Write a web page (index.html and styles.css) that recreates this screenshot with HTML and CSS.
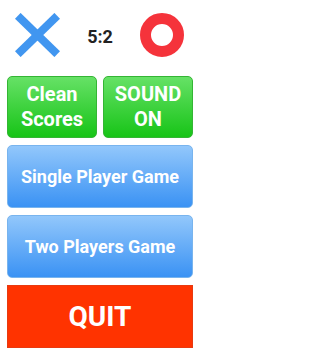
FILE: index.html
```html
<!DOCTYPE html>
<html>
<head>
<meta charset="utf-8">
<link rel="stylesheet" href="styles.css">
</head>
<body>
<div class="screen">
  <div class="header">
    <svg class="icon-x" width="45" height="44" viewBox="0 0 45 44">
      <line x1="2.8" y1="2.8" x2="42.2" y2="41.2" stroke="#4196f0" stroke-width="8"/>
      <line x1="42.2" y1="2.8" x2="2.8" y2="41.2" stroke="#4196f0" stroke-width="8"/>
    </svg>
    <div class="score">5:2</div>
    <svg class="icon-o" width="44" height="44" viewBox="0 0 44 44">
      <circle cx="22" cy="22" r="16.5" fill="none" stroke="#f5333b" stroke-width="11"/>
    </svg>
  </div>
  <div class="row">
    <div class="btn green">Clean<br>Scores</div>
    <div class="btn green">SOUND<br>ON</div>
  </div>
  <div class="btn blue">Single Player Game</div>
  <div class="btn blue">Two Players Game</div>
  <div class="btn quit">QUIT</div>
</div>
</body>
</html>
```
FILE: styles.css
```css
html, body {
  margin: 0;
  padding: 0;
  background: #ffffff;
}
.screen {
  width: 200px;
  height: 355px;
  box-sizing: border-box;
  padding: 0 7px 7px 7px;
  display: flex;
  flex-direction: column;
  gap: 7px;
  font-family: Roboto, "Liberation Sans", sans-serif;
}
.header {
  height: 69px;
  display: flex;
  align-items: center;
  justify-content: space-between;
  padding: 0 9px 0 8px;
}
.icon-x, .icon-o {
  display: block;
}
.score {
  font-size: 18px;
  font-weight: bold;
  color: #222222;
  padding-top: 3px;
}
.row {
  display: flex;
  gap: 6px;
  height: 62px;
}
.btn {
  box-sizing: border-box;
  display: flex;
  align-items: center;
  justify-content: center;
  text-align: center;
  color: #ffffff;
  font-weight: bold;
}
.green {
  flex: 1;
  height: 62px;
  border-radius: 5px;
  border: 1px solid #34b534;
  background: linear-gradient(#66e166, #17c417);
  font-size: 20px;
  line-height: 25px;
}
.blue {
  height: 63px;
  border-radius: 5px;
  border: 1px solid #78b4ee;
  background: linear-gradient(#92c7fb, #3a92f4);
  font-size: 18px;
}
.quit {
  height: 63px;
  background: #ff3300;
  border: 1px solid #e83a10;
  font-size: 28px;
}
```
